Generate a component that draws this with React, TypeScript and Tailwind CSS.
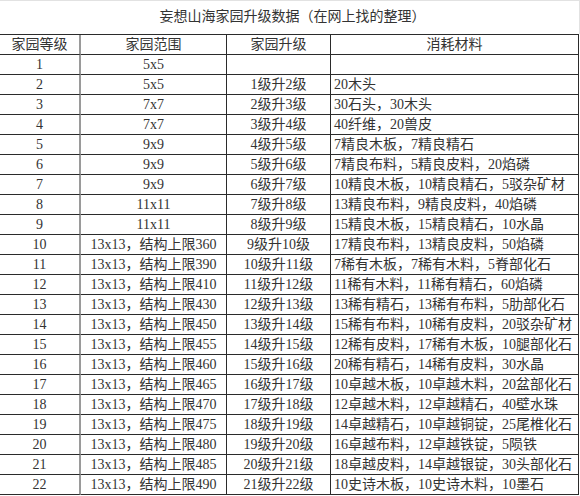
import React from "react";

const rows: [string, string, string, string][] = [
  ["1", "5x5", "", ""],
  ["2", "5x5", "1级升2级", "20木头"],
  ["3", "7x7", "2级升3级", "30石头，30木头"],
  ["4", "7x7", "3级升4级", "40纤维，20兽皮"],
  ["5", "9x9", "4级升5级", "7精良木板，7精良精石"],
  ["6", "9x9", "5级升6级", "7精良布料，5精良皮料，20焰磷"],
  ["7", "9x9", "6级升7级", "10精良木板，10精良精石，5驳杂矿材"],
  ["8", "11x11", "7级升8级", "13精良布料，9精良皮料，40焰磷"],
  ["9", "11x11", "8级升9级", "15精良木板，15精良精石，10水晶"],
  ["10", "13x13，结构上限360", "9级升10级", "17精良布料，13精良皮料，50焰磷"],
  ["11", "13x13，结构上限390", "10级升11级", "7稀有木板，7稀有木料，5脊部化石"],
  ["12", "13x13，结构上限410", "11级升12级", "11稀有木料，11稀有精石，60焰磷"],
  ["13", "13x13，结构上限430", "12级升13级", "13稀有精石，13稀有布料，5肋部化石"],
  ["14", "13x13，结构上限450", "13级升14级", "15稀有布料，10稀有皮料，20驳杂矿材"],
  ["15", "13x13，结构上限455", "14级升15级", "12稀有皮料，17稀有木板，10腿部化石"],
  ["16", "13x13，结构上限460", "15级升16级", "20稀有精石，14稀有皮料，30水晶"],
  ["17", "13x13，结构上限465", "16级升17级", "10卓越木板，10卓越木料，20盆部化石"],
  ["18", "13x13，结构上限470", "17级升18级", "12卓越木料，12卓越精石，40壁水珠"],
  ["19", "13x13，结构上限475", "18级升19级", "14卓越精石，10卓越铜锭，25尾椎化石"],
  ["20", "13x13，结构上限480", "19级升20级", "16卓越布料，12卓越铁锭，5陨铁"],
  ["21", "13x13，结构上限485", "20级升21级", "18卓越皮料，14卓越银锭，30头部化石"],
  ["22", "13x13，结构上限490", "21级升22级", "10史诗木板，10史诗木料，10墨石"],
];

const font = { fontFamily: '"Liberation Serif", "Noto Sans CJK SC", serif' };

function Row({ cells, header }: { cells: [string, string, string, string]; header?: boolean }) {
  return (
    <>
      <div className="h-[20px] border-b border-r-2 border-b-[#2b2b2b] border-r-[#9a9a9a] flex items-center justify-center leading-none">
        {cells[0]}
      </div>
      <div className="h-[20px] border-b border-r border-[#2b2b2b] flex items-center justify-center leading-none whitespace-nowrap">
        {cells[1]}
      </div>
      <div className="h-[20px] border-b border-r border-[#2b2b2b] flex items-center justify-center leading-none whitespace-nowrap">
        {cells[2]}
      </div>
      <div
        className={
          header
            ? "h-[20px] border-b border-r border-[#2b2b2b] flex items-center justify-center leading-none whitespace-nowrap"
            : "h-[20px] border-b border-r border-[#2b2b2b] flex items-center pl-[3px] leading-none whitespace-nowrap"
        }
      >
        {cells[3]}
      </div>
    </>
  );
}

export default function App() {
  return (
    <div className="w-[580px] h-[496px] bg-white text-[#333333] text-[14px] overflow-hidden" style={font}>
      <div className="h-[34px] w-[580px] border-t border-r border-[#e2e2e2] flex items-center justify-center text-[14px] pb-[2px] pl-[6px]">
        妄想山海家园升级数据（在网上找的整理）
      </div>
      <div className="grid grid-cols-[81px_146px_104px_248px] w-[579px] border-t border-[#2b2b2b]">
        <Row header cells={["家园等级", "家园范围", "家园升级", "消耗材料"]} />
        {rows.map((r, i) => (
          <Row key={i} cells={r} />
        ))}
      </div>
    </div>
  );
}
